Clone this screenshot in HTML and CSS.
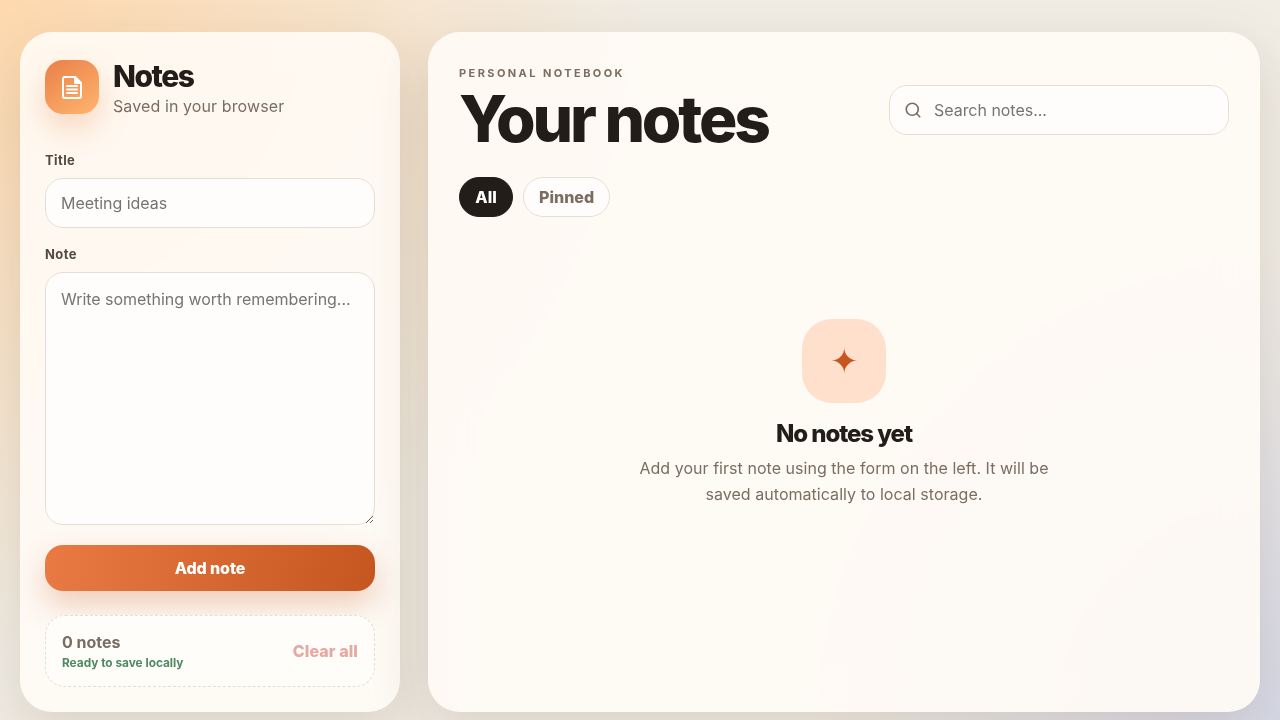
FILE: index.html
```html
<!DOCTYPE html>
<html>
<head>
	<title>Notes</title>
	<link rel="stylesheet" href="styles.css">
</head>
<body>
	<div class="app">
		<aside class="sidebar">
			<div class="brand">
				<div class="brand-icon">
					<svg width="24" height="24" viewBox="0 0 24 24" fill="none" stroke="#fff" stroke-width="2" stroke-linecap="round" stroke-linejoin="round">
						<path d="M5 2h10l6 6v13a2 2 0 0 1-2 2H5a2 2 0 0 1-2-2V4a2 2 0 0 1 2-2z"/>
						<path d="M15 2v6h6z" fill="#fff"/>
						<path d="M7 11h10"/>
						<path d="M7 14.5h10"/>
						<path d="M7 18h10"/>
					</svg>
				</div>
				<div class="brand-text">
					<h2>Notes</h2>
					<p>Saved in your browser</p>
				</div>
			</div>
			<label class="field-label" for="title">Title</label>
			<input class="field" id="title" type="text" placeholder="Meeting ideas">
			<label class="field-label" for="note">Note</label>
			<textarea class="field note-area" id="note" placeholder="Write something worth remembering..."></textarea>
			<button class="add-btn">Add note</button>
			<div class="status">
				<div>
					<div class="status-count">0 notes</div>
					<div class="status-msg">Ready to save locally</div>
				</div>
				<button class="clear-btn">Clear all</button>
			</div>
		</aside>
		<main class="main">
			<div class="main-top">
				<div>
					<div class="eyebrow">PERSONAL NOTEBOOK</div>
					<h1>Your notes</h1>
				</div>
				<div class="search">
					<svg width="18" height="18" viewBox="0 0 24 24" fill="none" stroke="#7b6d62" stroke-width="2.2" stroke-linecap="round" stroke-linejoin="round">
						<circle cx="11" cy="11" r="8"/>
						<path d="m21 21-4.3-4.3"/>
					</svg>
					<input type="text" placeholder="Search notes...">
				</div>
			</div>
			<div class="filters">
				<button class="pill active">All</button>
				<button class="pill">Pinned</button>
			</div>
			<div class="empty">
				<div class="empty-icon">✦</div>
				<h3>No notes yet</h3>
				<p>Add your first note using the form on the left. It will be saved automatically to local storage.</p>
			</div>
		</main>
	</div>
</body>
</html>
```

FILE: styles.css
```css
* {
	box-sizing: border-box;
}
html, body {
	height: 100%;
}
body {
	margin: 0;
	font-family: Inter, "Liberation Sans", sans-serif;
	color: #221d18;
	overflow: hidden;
	background:
		radial-gradient(circle at 0% 0%, #ffd9ae 0, rgba(255, 217, 174, 0) 44%),
		radial-gradient(circle at 100% 100%, #d7d9e8 0, rgba(215, 217, 232, 0) 32%),
		#f1ede5;
}
.app {
	display: flex;
	gap: 28px;
	height: 720px;
	padding: 32px 20px 8px;
}
.sidebar, .main {
	border-radius: 32px;
	backdrop-filter: blur(18px);
	box-shadow: 0 20px 60px rgba(90, 60, 30, 0.16);
	background: rgba(255, 251, 245, 0.9);
}
.sidebar {
	width: 380px;
	flex-shrink: 0;
	display: flex;
	flex-direction: column;
	padding: 28px 25px 25px;
}
.main {
	flex: 1;
	padding: 31px 31px;
}
.brand {
	display: flex;
	gap: 14px;
	margin-bottom: 32px;
}
.brand-icon {
	width: 54px;
	height: 54px;
	border-radius: 18px;
	display: flex;
	align-items: center;
	justify-content: center;
	background: linear-gradient(145deg, #e97f47, #ffb56f);
	box-shadow: 0 14px 30px rgba(232, 125, 70, 0.28);
}
.brand-text h2 {
	margin: 0;
	font-size: 30px;
	line-height: 32px;
	font-weight: 800;
	letter-spacing: -0.05em;
}
.brand-text p {
	margin: 2px 0 0;
	font-size: 16px;
	line-height: 24px;
	letter-spacing: 0.1px;
	color: #7b6d62;
}
.field-label {
	display: block;
	font-size: 13px;
	line-height: 20px;
	font-weight: 700;
	letter-spacing: 0.03em;
	color: #564a40;
	margin-bottom: 8px;
}
.field {
	display: block;
	flex-shrink: 0;
	width: 100%;
	height: 50px;
	padding: 0 15px;
	margin-bottom: 16px;
	border: 1px solid #e4ded6;
	border-radius: 18px;
	background: #fffdfb;
	font-family: inherit;
	font-size: 16px;
	letter-spacing: -0.03px;
	color: #221d18;
	outline: none;
}
.note-area {
	height: 253px;
	padding: 13px 15px;
	line-height: 26px;
	margin-bottom: 20px;
}
.add-btn {
	flex-shrink: 0;
	height: 46px;
	border: 0;
	border-radius: 18px;
	background: linear-gradient(100deg, #ea7a44, #c6561f);
	color: #fff;
	font-family: inherit;
	font-size: 16px;
	font-weight: 800;
	letter-spacing: -0.1px;
	box-shadow: 0 14px 30px rgba(201, 90, 36, 0.28);
	margin-bottom: 24px;
}
.status {
	flex-shrink: 0;
	height: 72px;
	display: flex;
	align-items: center;
	justify-content: space-between;
	padding: 1px 16px 0;
	border: 1px dashed #e4ded6;
	border-radius: 20px;
	background: #fffdf9;
}
.status-count {
	font-size: 16px;
	line-height: 20px;
	font-weight: 700;
	color: #7b6d62;
}
.status-msg {
	margin-top: 3px;
	font-size: 11.84px;
	line-height: 16px;
	font-weight: 700;
	color: #4f8a63;
}
.clear-btn {
	padding: 0;
	margin-bottom: 2px;
	border: 0;
	background: none;
	font-family: inherit;
	font-size: 16px;
	font-weight: 800;
	letter-spacing: 0.1px;
	color: #e5a8a3;
}
.main-top {
	display: flex;
	justify-content: space-between;
	align-items: center;
}
.eyebrow {
	font-size: 11px;
	line-height: 20px;
	font-weight: 700;
	letter-spacing: 0.22em;
	color: #7b6d62;
	margin-bottom: 1px;
}
h1 {
	margin: 0;
	padding-bottom: 3px;
	font-size: 64px;
	line-height: 70px;
	font-weight: 800;
	letter-spacing: -0.05em;
	color: #221d18;
}
.search {
	width: 340px;
	height: 50px;
	display: flex;
	align-items: center;
	gap: 12px;
	padding: 0 14px;
	border: 1px solid #e4ded6;
	border-radius: 18px;
	background: #fffdfb;
}
.search input {
	flex: 1;
	min-width: 0;
	border: 0;
	padding: 0;
	background: none;
	font-family: inherit;
	font-size: 16px;
	letter-spacing: -0.03px;
	outline: none;
}
.filters {
	display: flex;
	gap: 10px;
	margin-top: 20px;
}
.pill {
	height: 40px;
	min-width: 54px;
	padding: 0 15px;
	border: 1px solid #e4ded6;
	border-radius: 20px;
	background: #fffdfb;
	font-family: inherit;
	font-size: 16px;
	font-weight: 800;
	color: #7b6d62;
}
.pill.active {
	background: #221d18;
	border-color: #221d18;
	color: #fff;
}
.empty {
	display: flex;
	flex-direction: column;
	align-items: center;
	text-align: center;
	margin-top: 102px;
}
.empty-icon {
	width: 84px;
	height: 84px;
	padding-bottom: 2px;
	border-radius: 30px;
	display: flex;
	align-items: center;
	justify-content: center;
	background: #ffe0cc;
	color: #c6561f;
	font-size: 34px;
}
.empty h3 {
	margin: 16px 0 6px;
	font-size: 24px;
	line-height: 30px;
	font-weight: 800;
	letter-spacing: -0.045em;
}
.empty p {
	margin: 0;
	width: 440px;
	font-size: 16px;
	line-height: 26px;
	letter-spacing: 0.04px;
	color: #7b6d62;
}
```
